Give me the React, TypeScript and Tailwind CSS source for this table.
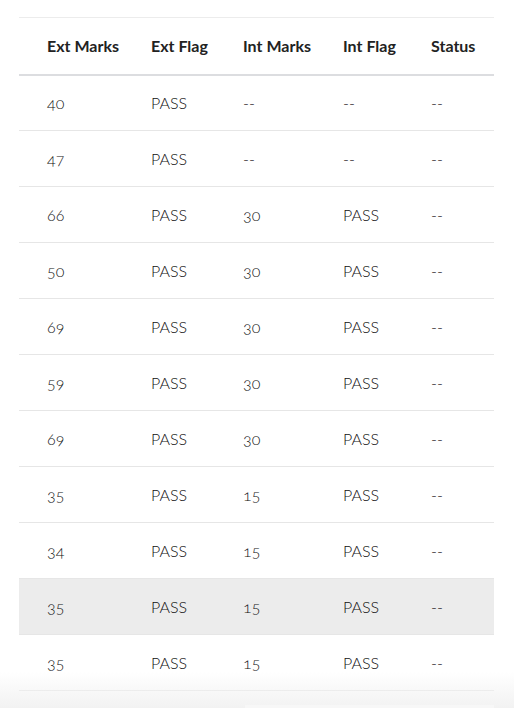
const rows = [
  ["40", "PASS", "--", "--", "--"],
  ["47", "PASS", "--", "--", "--"],
  ["66", "PASS", "30", "PASS", "--"],
  ["50", "PASS", "30", "PASS", "--"],
  ["69", "PASS", "30", "PASS", "--"],
  ["59", "PASS", "30", "PASS", "--"],
  ["69", "PASS", "30", "PASS", "--"],
  ["35", "PASS", "15", "PASS", "--"],
  ["34", "PASS", "15", "PASS", "--"],
  ["35", "PASS", "15", "PASS", "--"],
  ["35", "PASS", "15", "PASS", "--"],
];

const heads = ["Ext Marks", "Ext Flag", "Int Marks", "Int Flag", "Status"];
const widths = ["w-[104px]", "w-[92px]", "w-[100px]", "w-[88px]", "w-[91px]"];

export default function App() {
  return (
    <div
      className="relative h-[708px] overflow-hidden bg-white pt-[17px]"
      style={{ fontFamily: "Lato, 'Noto Sans', sans-serif" }}
    >
      <table className="ml-[19px] w-[475px] table-fixed border-collapse text-[16px]">
        <thead>
          <tr className="h-[57px] border-t border-b-2 border-t-[#ececec] border-b-[#dcdde0]">
            {heads.map((h, i) => (
              <th
                key={h}
                className={`${widths[i]} pl-[28px] text-left font-bold text-[#222]`}
              >
                {h}
              </th>
            ))}
          </tr>
        </thead>
        <tbody>
          {rows.map((r, ri) => (
            <tr
              key={ri}
              className={`h-[56px] border-b border-[#e6e6e6] ${ri === 9 ? "bg-[#ececec]" : ""}`}
            >
              {r.map((c, ci) => (
                <td
                  key={ci}
                  className="pl-[28px] text-left font-light text-[#111] oldstyle-nums"
                >
                  {c}
                </td>
              ))}
            </tr>
          ))}
        </tbody>
      </table>
      <div className="pointer-events-none absolute inset-x-0 bottom-0 h-[36px] bg-gradient-to-b from-transparent to-[#f2f2f2]" />
      <div className="absolute bottom-0 left-[245px] right-[20px] h-[3px] bg-[#f7f7f7]" />
    </div>
  );
}
